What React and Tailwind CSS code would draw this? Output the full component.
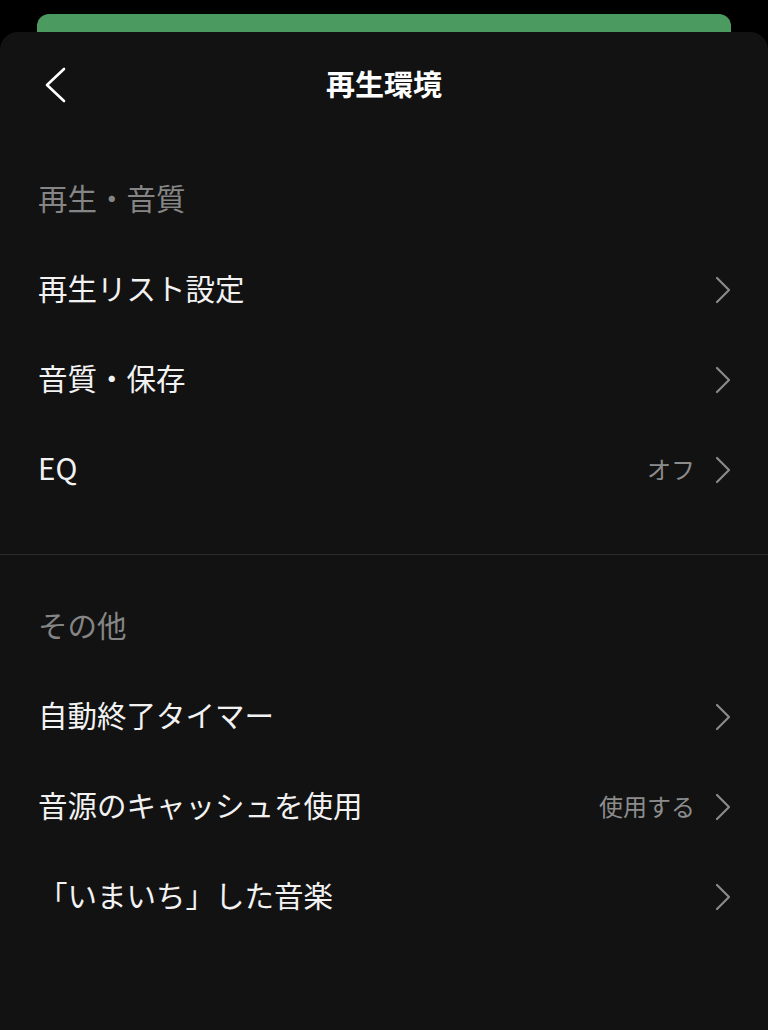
import React from "react";

const Chevron = () => (
  <svg width="18" height="28" viewBox="0 0 18 28" fill="none" className="shrink-0">
    <path d="M3 2 L15 14 L3 26" stroke="#8a8a8a" strokeWidth="2.2" strokeLinecap="round" strokeLinejoin="round" />
  </svg>
);

const Row = ({ label, value }) => (
  <div className="h-[90px] flex items-center justify-between pl-[38px] pr-[36px]">
    <span className="text-[29.5px] text-[#f2f2f2] leading-none pb-[4px]">{label}</span>
    <div className="flex items-center gap-[19px]">
      {value && <span className="text-[24px] text-[#8c8c8c] leading-none pb-[3px]">{value}</span>}
      <Chevron />
    </div>
  </div>
);

const SectionTitle = ({ children }) => (
  <div className="h-[90px] flex items-center pl-[38px]">
    <span className="text-[29.5px] text-[#858585] leading-none pb-[4px]">{children}</span>
  </div>
);

export default function App() {
  return (
    <div
      className="w-[768px] h-[1030px] bg-black overflow-hidden flex flex-col"
      style={{ fontFamily: '"Noto Sans CJK JP", "Noto Sans", sans-serif' }}
    >
      <div className="pt-[14px] px-[37px] shrink-0">
        <div className="h-[18px] bg-[#4b9a60] rounded-t-[12px]" />
      </div>
      <div className="flex-1 bg-[#121212] rounded-t-[18px]">
        <div className="h-[106px] relative flex items-center justify-center">
          <svg width="24" height="36" viewBox="0 0 24 36" fill="none" className="absolute left-[44px] top-[35px]">
            <path d="M20 2 L3 18 L20 34" stroke="#ffffff" strokeWidth="2.6" strokeLinecap="round" strokeLinejoin="round" />
          </svg>
          <span className="text-[29px] font-bold text-white leading-none pb-[4px]">再生環境</span>
        </div>
        <div className="pt-[17px] pb-[39px]">
          <SectionTitle>再生・音質</SectionTitle>
          <Row label="再生リスト設定" />
          <Row label="音質・保存" />
          <Row label="EQ" value="オフ" />
        </div>
        <div className="h-px bg-[#2a2a2a]" />
        <div className="pt-[27px]">
          <SectionTitle>その他</SectionTitle>
          <Row label="自動終了タイマー" />
          <Row label="音源のキャッシュを使用" value="使用する" />
          <Row label="「いまいち」した音楽" />
        </div>
      </div>
    </div>
  );
}
